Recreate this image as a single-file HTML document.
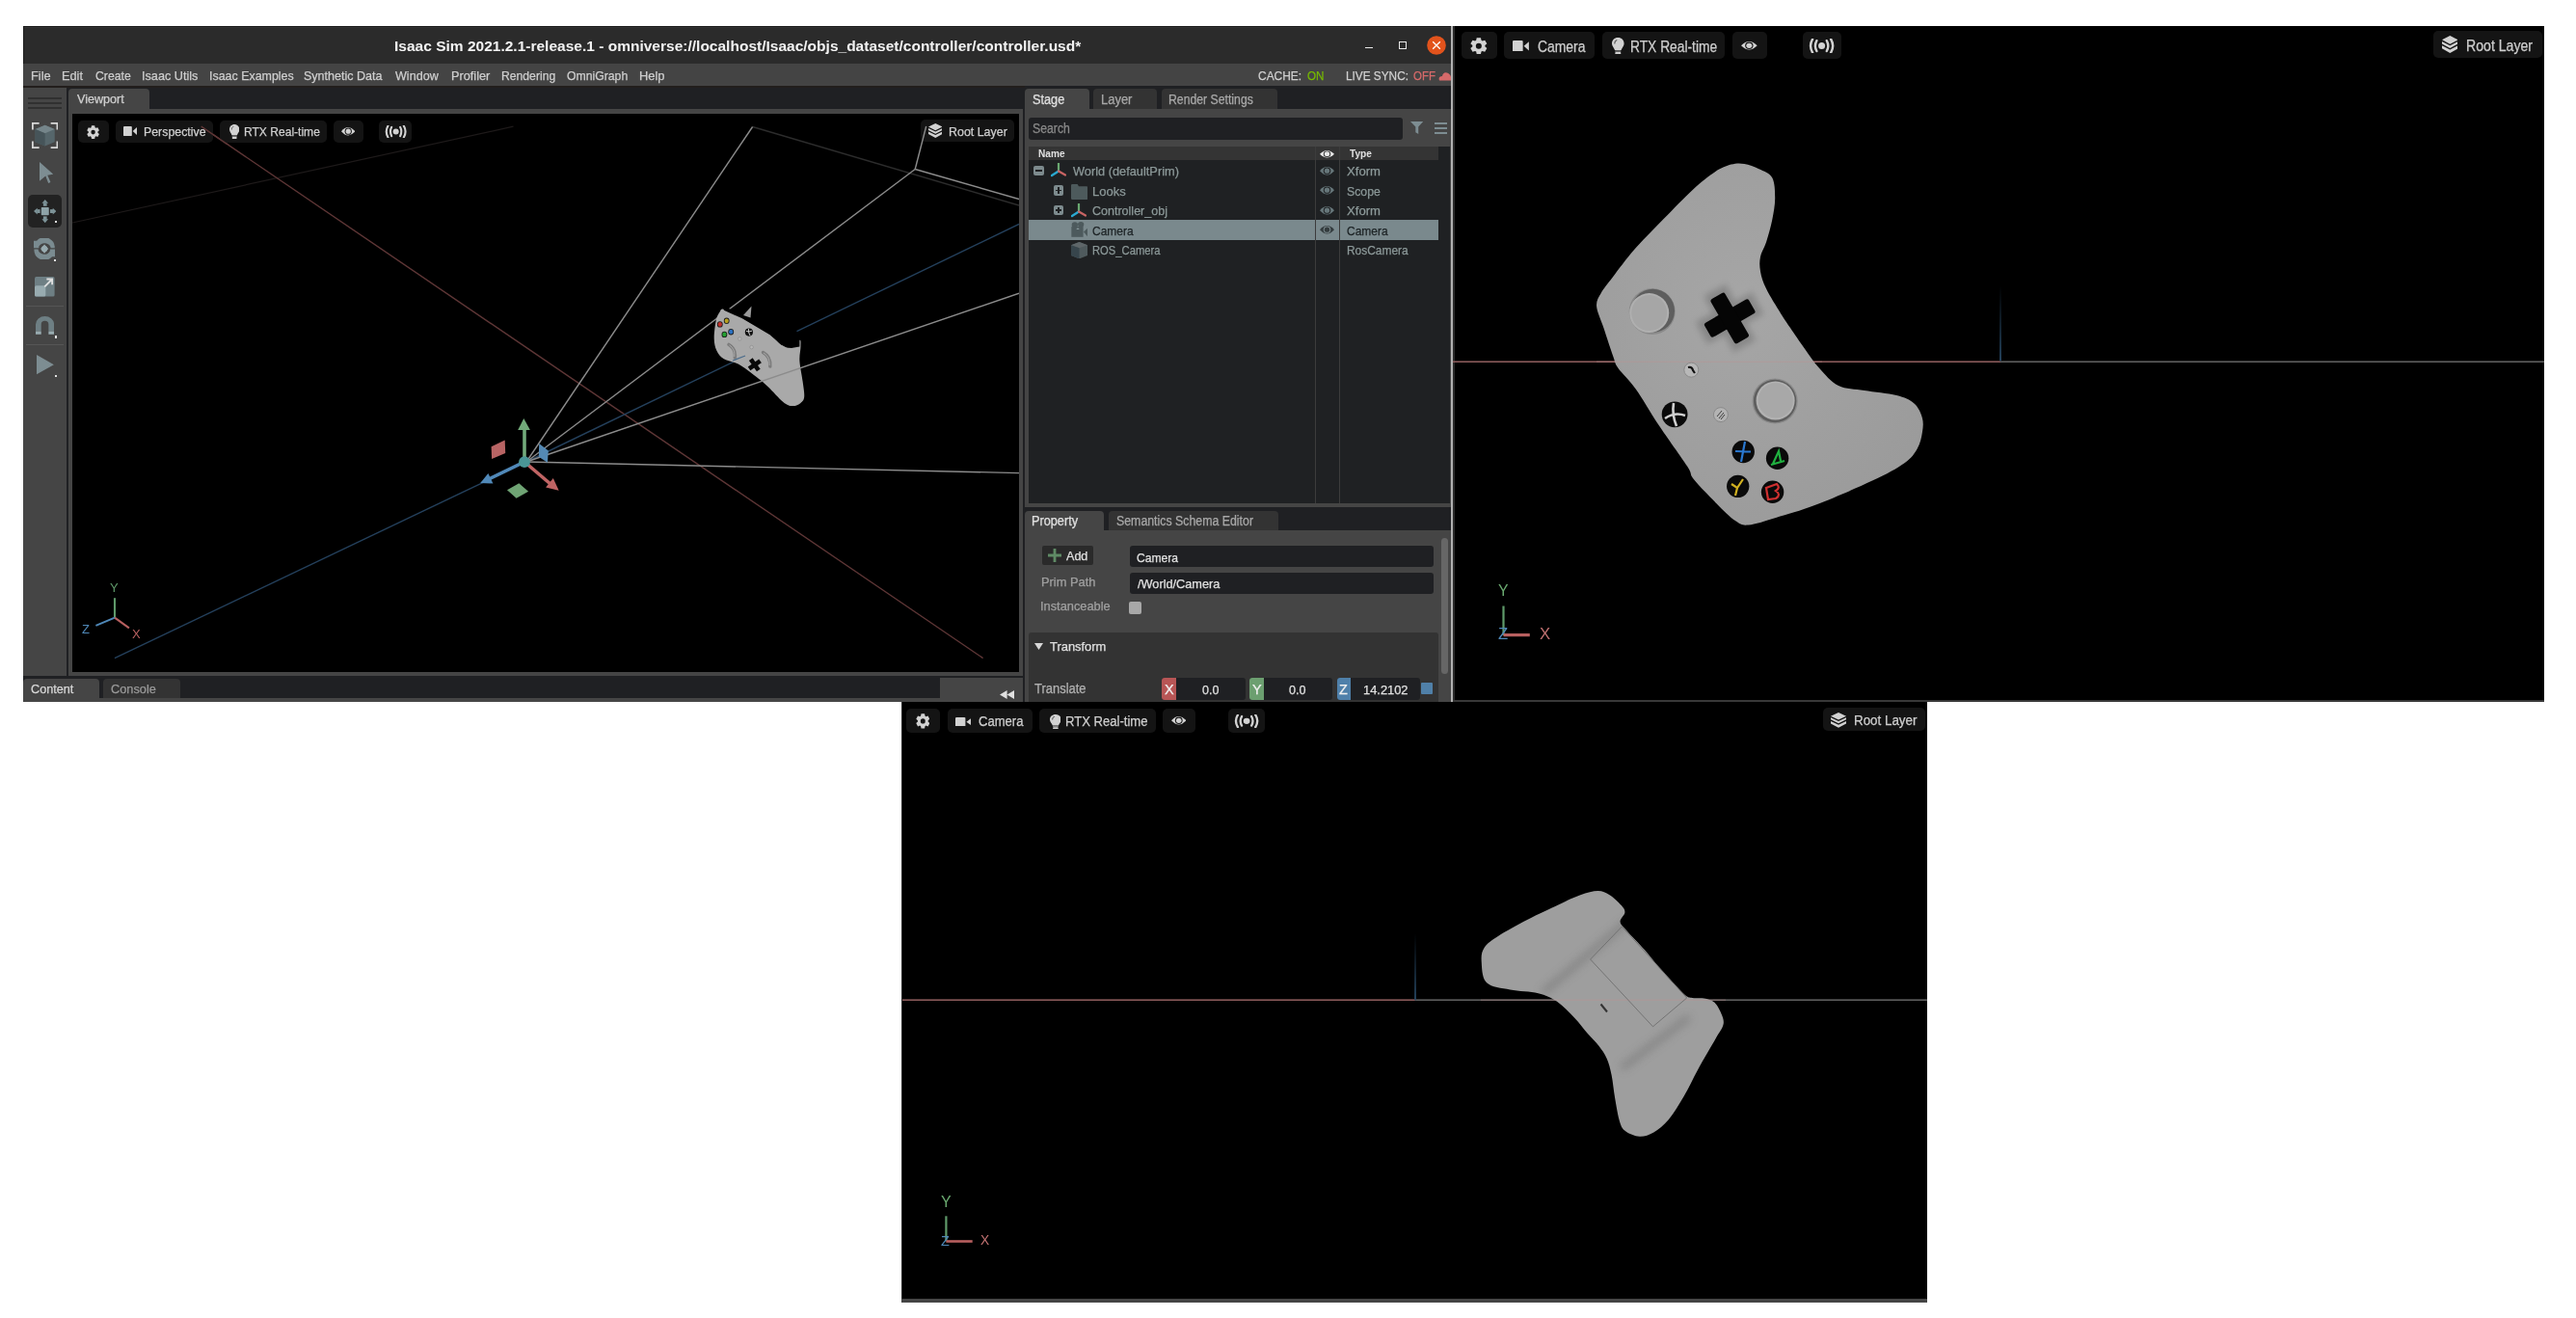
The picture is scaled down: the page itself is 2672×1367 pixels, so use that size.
<!DOCTYPE html>
<html><head><meta charset="utf-8"><style>
html,body{margin:0;padding:0;overflow:hidden;}
body{width:2672px;height:1367px;background:#fff;position:relative;overflow:hidden;font-family:"Liberation Sans",sans-serif;}
body>div,body>svg{position:absolute;}
svg{overflow:hidden;}
.t{white-space:nowrap;line-height:1;-webkit-text-stroke:0.25px currentColor;}
</style></head><body>
<div style="left:24.0px;top:27.0px;width:1481.0px;height:701.0px;background:#454545;"></div>
<div style="left:24.0px;top:27.0px;width:1481.0px;height:39.0px;background:#2b2b2b;border-radius:3px 3px 0 0;"></div>
<div style="left:24.0px;top:27.0px;width:1481.0px;height:1.0px;background:#1a1a1a;"></div>
<div style="left:25.0px;top:28.0px;width:1479.0px;height:1.0px;background:#333333;"></div>
<div style="left:24.0px;top:27.0px;width:1.0px;height:39.0px;background:#1c1c1c;"></div>
<div class="t" style="left:408.95px;top:39.50px;font-size:15.36px;color:#f2f2f2;font-weight:bold;transform:scaleX(1.0101);transform-origin:0 0;-webkit-text-stroke:0;">Isaac Sim 2021.2.1-release.1 - omniverse://localhost/Isaac/objs_dataset/controller/controller.usd*</div>
<div style="left:1416.0px;top:48.5px;width:8.0px;height:1.7px;background:#e8e8e8;"></div>
<div style="left:1451.0px;top:43.0px;width:8.0px;height:8.0px;background:transparent;border:1.3px solid #e8e8e8;box-sizing:border-box;"></div>
<svg style="left:1480px;top:36.8px" width="20" height="20"><circle cx="10" cy="10" r="9.8" fill="#e2531c"/><path d="M6.2 6.2 L13.8 13.8 M13.8 6.2 L6.2 13.8" stroke="#fff" stroke-width="1.3"/></svg>
<div style="left:24.0px;top:66.0px;width:1481.0px;height:23.0px;background:#444444;"></div>
<div class="t" style="left:32.32px;top:71.67px;font-size:13.62px;color:#cfcfcf;transform:scaleX(0.9423);transform-origin:0 0;">File</div>
<div class="t" style="left:64.32px;top:71.67px;font-size:13.62px;color:#cfcfcf;transform:scaleX(0.9378);transform-origin:0 0;">Edit</div>
<div class="t" style="left:98.79px;top:71.67px;font-size:13.62px;color:#cfcfcf;transform:scaleX(0.8981);transform-origin:0 0;">Create</div>
<div class="t" style="left:146.69px;top:71.67px;font-size:13.62px;color:#cfcfcf;transform:scaleX(0.9309);transform-origin:0 0;">Isaac Utils</div>
<div class="t" style="left:216.61px;top:71.67px;font-size:13.62px;color:#cfcfcf;transform:scaleX(0.9132);transform-origin:0 0;">Isaac Examples</div>
<div class="t" style="left:315.48px;top:71.67px;font-size:13.62px;color:#cfcfcf;transform:scaleX(0.9205);transform-origin:0 0;">Synthetic Data</div>
<div class="t" style="left:410.46px;top:71.67px;font-size:13.62px;color:#cfcfcf;transform:scaleX(0.9237);transform-origin:0 0;">Window</div>
<div class="t" style="left:467.62px;top:71.67px;font-size:13.62px;color:#cfcfcf;transform:scaleX(0.9357);transform-origin:0 0;">Profiler</div>
<div class="t" style="left:520.16px;top:71.67px;font-size:13.62px;color:#cfcfcf;transform:scaleX(0.8951);transform-origin:0 0;">Rendering</div>
<div class="t" style="left:588.49px;top:71.67px;font-size:13.62px;color:#cfcfcf;transform:scaleX(0.8986);transform-origin:0 0;">OmniGraph</div>
<div class="t" style="left:663.11px;top:71.67px;font-size:13.62px;color:#cfcfcf;transform:scaleX(0.9465);transform-origin:0 0;">Help</div>
<div class="t" style="left:1305.15px;top:71.79px;font-size:13.48px;color:#d0d0d0;transform:scaleX(0.8873);transform-origin:0 0;">CACHE:</div>
<div class="t" style="left:1356.06px;top:71.79px;font-size:13.48px;color:#76b900;transform:scaleX(0.8644);transform-origin:0 0;">ON</div>
<div class="t" style="left:1396.02px;top:71.79px;font-size:13.48px;color:#d0d0d0;transform:scaleX(0.8763);transform-origin:0 0;">LIVE SYNC:</div>
<div class="t" style="left:1465.57px;top:71.79px;font-size:13.48px;color:#d66a6a;transform:scaleX(0.8502);transform-origin:0 0;">OFF</div>
<svg style="left:1492px;top:74px" width="13" height="10"><path d="M1 9.5 Q-0.5 5 4 5 Q5 0.5 9 1.5 Q12.5 2.5 13 6 L13 9.5 Z" fill="#d66a6a"/></svg>
<div style="left:24.0px;top:89.0px;width:1481.0px;height:2.0px;background:#221e1c;"></div>
<div style="left:24.0px;top:91.0px;width:45.0px;height:610.0px;background:#454545;"></div>
<div style="left:69.0px;top:91.0px;width:2.0px;height:610.0px;background:#1f2023;"></div>
<div style="left:29.0px;top:100.8px;width:34.8px;height:2.0px;background:#303030;"></div>
<div style="left:29.0px;top:106.1px;width:34.8px;height:2.0px;background:#303030;"></div>
<div style="left:29.0px;top:111.0px;width:34.8px;height:2.0px;background:#303030;"></div>
<svg style="left:32.80px;top:127.10px;" width="27.30" height="27.00" viewBox="0 0 100 100" preserveAspectRatio="none"><g fill="none" stroke="#d8d8d8" stroke-width="7"><path d="M3 28 V3 H28"/><path d="M72 3 H97 V28"/><path d="M3 72 V97 H28"/><path d="M97 72 V97 H72"/></g><path d="M50 10 L87 26 L87 75 L50 91 L13 75 L13 26 Z" fill="#56666b"/><path d="M50 10 L87 26 L50 42 L13 26 Z" fill="#75858a"/><path d="M13 26 L50 42 L50 91 L13 75 Z" fill="#465459"/></svg>
<svg style="left:40.70px;top:168.20px;" width="14.30" height="22.00" viewBox="0 0 100 100" preserveAspectRatio="none"><path d="M0 0 L100 58 L58 62 L80 96 L64 100 L44 66 L0 90 Z" fill="#7d8d92"/></svg>
<div style="left:29.0px;top:201.5px;width:34.6px;height:34.5px;background:#222222;border-radius:5px;"></div>
<svg style="left:34.80px;top:207.20px;" width="23.50" height="24.20" viewBox="0 0 100 100" preserveAspectRatio="none"><g fill="#7d9398"><path d="M50 0 L64 16 L36 16 Z"/><path d="M50 100 L64 84 L36 84 Z"/><path d="M0 50 L16 36 L16 64 Z"/><path d="M100 50 L84 36 L84 64 Z"/><rect x="42" y="14" width="16" height="14"/><rect x="42" y="72" width="16" height="14"/><rect x="14" y="42" width="14" height="16"/><rect x="72" y="42" width="14" height="16"/><rect x="33" y="33" width="34" height="34" rx="3" fill="#8ea3a8"/></g></svg>
<div style="left:56.5px;top:229.3px;width:2.2px;height:2.2px;background:#e0e0e0;"></div>
<svg style="left:34.80px;top:246.80px;" width="22.20" height="21.90" viewBox="0 0 100 100" preserveAspectRatio="none"><path d="M0 47 L0 12 L14 12 L22 5 A48 48 0 0 1 98 47 L80 47 A30 30 0 0 0 24 40 L24 47 Z" fill="#7a8b90"/><path d="M100 53 L100 88 L86 88 L78 95 A48 48 0 0 1 2 53 L20 53 A30 30 0 0 0 76 60 L76 53 Z" fill="#7a8b90"/><path d="M50 30 L68 50 L50 72 L32 50 Z" fill="#98abb0"/><circle cx="50" cy="51" r="14" fill="#98abb0"/></svg>
<div style="left:56.3px;top:268.6px;width:2.2px;height:2.2px;background:#e0e0e0;"></div>
<svg style="left:36.00px;top:287.20px;" width="20.60" height="20.60" viewBox="0 0 100 100" preserveAspectRatio="none"><rect x="0" y="0" width="100" height="100" rx="8" fill="#6e7f84"/><rect x="0" y="45" width="55" height="55" rx="8" fill="#98abb0"/><path d="M50 50 L88 12 M60 12 H88 V40" stroke="#e0e0e0" stroke-width="9" fill="none"/></svg>
<div style="left:26.7px;top:317.2px;width:39.1px;height:1.0px;background:#555555;"></div>
<svg style="left:36.90px;top:328.40px;" width="19.10" height="18.80" viewBox="0 0 100 100" preserveAspectRatio="none"><path d="M0 80 V45 A50 45 0 0 1 100 45 V80 H70 V45 A20 20 0 0 0 30 45 V80 Z" fill="#6e7f84"/><rect x="0" y="82" width="30" height="18" fill="#98abb0"/><rect x="70" y="82" width="30" height="18" fill="#98abb0"/></svg>
<div style="left:56.5px;top:348.4px;width:2.2px;height:2.2px;background:#e0e0e0;"></div>
<div style="left:26.7px;top:356.8px;width:39.1px;height:1.0px;background:#555555;"></div>
<svg style="left:37.80px;top:368.30px;" width="17.90" height="20.30" viewBox="0 0 100 100" preserveAspectRatio="none"><path d="M0 0 L100 50 L0 100 Z" fill="#7d8d92"/></svg>
<div style="left:56.5px;top:388.9px;width:2.2px;height:2.2px;background:#e0e0e0;"></div>
<div style="left:71.0px;top:91.0px;width:990.0px;height:22.0px;background:#1f2023;"></div>
<div style="left:71.0px;top:92.0px;width:84.0px;height:21.0px;background:#454545;border-radius:4px 4px 0 0;"></div>
<div class="t" style="left:79.81px;top:97.05px;font-size:12.46px;color:#d0d0d0;transform:scaleX(1.0109);transform-origin:0 0;">Viewport</div>
<div style="left:71.0px;top:113.0px;width:990.0px;height:588.0px;background:#454545;"></div>
<div style="left:75.0px;top:118.0px;width:982.0px;height:579.0px;background:#000000;"></div>
<div style="left:1061.0px;top:91.0px;width:2.0px;height:637.0px;background:#1f2023;"></div>
<svg style="left:75px;top:118px" width="982" height="579" viewBox="75 118 982 579"><line x1="75" y1="231" x2="532.5" y2="131.2" stroke="#1e1a1a" stroke-width="1.2"/><line x1="208.7" y1="131.2" x2="1019.6" y2="682.6" stroke="#5e3636" stroke-width="1.4"/><line x1="118.9" y1="682.6" x2="546" y2="479" stroke="#24405c" stroke-width="1.4"/><line x1="546" y1="479" x2="1057" y2="232.4" stroke="#24405c" stroke-width="1.4"/><line x1="780.6" y1="131.5" x2="1057" y2="213" stroke="#2c2c2c" stroke-width="1.4"/><line x1="546" y1="479" x2="949.2" y2="175.5" stroke="#8c8c8c" stroke-width="1.4"/><line x1="546" y1="479" x2="780.6" y2="131.5" stroke="#8c8c8c" stroke-width="1.4"/><line x1="546" y1="479" x2="1057" y2="490.6" stroke="#8c8c8c" stroke-width="1.4"/><line x1="949.2" y1="175.5" x2="1057" y2="206.6" stroke="#8c8c8c" stroke-width="1.4"/><path d="M750.3 320.7 C752.9 321.1 759.2 324.0 762.5 325.5 C765.8 327.0 763.9 326.2 769.9 329.7 C775.9 333.2 791.9 342.1 798.6 346.7 C805.3 351.3 806.6 355.1 810.3 357.4 C814.0 359.7 817.7 361.4 820.9 360.6 C824.1 359.8 827.8 352.8 829.4 352.6 C831.0 352.4 830.5 355.9 830.5 359.5 C830.5 363.1 829.0 368.4 829.4 374.4 C829.8 380.4 831.8 389.4 832.6 395.6 C833.4 401.8 834.6 407.9 834.2 411.6 C833.9 415.3 832.5 416.3 830.5 417.9 C828.5 419.5 825.0 421.3 822.0 421.1 C819.0 420.9 816.6 420.3 812.4 416.9 C808.1 413.5 801.3 405.3 796.5 400.9 C791.7 396.5 788.8 394.2 783.7 390.3 C778.6 386.4 771.2 380.6 765.7 377.6 C760.2 374.6 754.5 374.5 750.8 372.2 C747.1 369.9 745.1 367.2 743.4 363.7 C741.7 360.2 740.8 356.3 740.7 351.0 C740.6 345.7 741.8 336.5 742.8 331.9 C743.8 327.3 745.4 325.3 746.6 323.4 C747.9 321.5 747.6 320.3 750.3 320.7 Z" fill="#a9a9a9"/><polygon points="750.8,318.1 769.9,325.5 798.6,344.6 822,355.2 829.4,352.6 829.4,359.5 820.9,361.1 810.3,357.4 798.6,347.3 769.9,330.3 750.8,321.8" fill="#000"/><polygon points="790,341 812,339.5 826,342.5 830,352.6 822,355.2 810.3,356.3 798.6,345.6" fill="#000"/><path d="M771 327 L779.5 317.5 L778.5 329.5 Z" fill="#9a9a9a"/><ellipse cx="746.8" cy="336.4" rx="2.9" ry="3.2" fill="#1a1a1a"/><ellipse cx="746.8" cy="336.4" rx="2.1" ry="2.4" fill="#c0302a"/><ellipse cx="753.7" cy="332.8" rx="2.9" ry="3.2" fill="#1a1a1a"/><ellipse cx="753.7" cy="332.8" rx="2.1" ry="2.4" fill="#b8a020"/><ellipse cx="751.4" cy="346.9" rx="2.9" ry="3.2" fill="#1a1a1a"/><ellipse cx="751.4" cy="346.9" rx="2.1" ry="2.4" fill="#22a030"/><ellipse cx="758.2" cy="344.2" rx="2.9" ry="3.2" fill="#1a1a1a"/><ellipse cx="758.2" cy="344.2" rx="2.1" ry="2.4" fill="#2a70c0"/><circle cx="776.9" cy="344.6" r="4.1" fill="#111"/><path d="M774 343.5 Q777 344.5 780 343.2 M776.5 341 Q776 345 778 348" stroke="#ddd" stroke-width="0.9" fill="none"/><circle cx="767.3" cy="351.4" r="1.8" fill="#b8b8b8" stroke="#888" stroke-width="0.6"/><circle cx="779.6" cy="360.1" r="1.8" fill="#b8b8b8" stroke="#888" stroke-width="0.6"/><g transform="translate(782.8,378.3) rotate(-35)"><rect x="-7" y="-2.3" width="14" height="4.6" fill="#080808"/><rect x="-2.3" y="-7" width="4.6" height="14" fill="#080808"/></g><path d="M756 357.4 Q763.5 362 762.3 371" stroke="#7c7c7c" stroke-width="3.4" fill="none" stroke-linecap="round"/><path d="M756.5 357.8 Q762.8 362 761.8 370" stroke="#a8a8a8" stroke-width="1" fill="none"/><path d="M791.5 365.6 Q799.5 370 798.8 380.1" stroke="#7c7c7c" stroke-width="3.4" fill="none" stroke-linecap="round"/><path d="M792 366 Q798.8 370 798.2 379" stroke="#a8a8a8" stroke-width="1" fill="none"/><line x1="546" y1="479" x2="1057" y2="304.2" stroke="#8c8c8c" stroke-width="1.4"/><line x1="760" y1="374" x2="773" y2="369" stroke="#4e6e8c" stroke-width="1.3"/><polygon points="509.6,463.3 523.7,456.4 524.2,470.1 510.1,476" fill="#b86464"/><polygon points="559.2,460.1 568.8,467.4 567.9,479.7 558.8,473.7" fill="#5489b4"/><polygon points="526,508.3 538.3,501.3 548.1,509.7 535.6,516.7" fill="#6fa474"/><line x1="544" y1="479" x2="544" y2="446" stroke="#72aa7a" stroke-width="3.6"/><polygon points="537.2,446 549.9,446 543.3,434.1" fill="#72aa7a"/><line x1="544" y1="479" x2="571" y2="502" stroke="#c06464" stroke-width="3.6"/><polygon points="566.1,505.6 573.8,496 579.7,508.8" fill="#c06464"/><line x1="544" y1="479" x2="508" y2="496.5" stroke="#5088b8" stroke-width="3.6"/><polygon points="498.2,501 506.4,491 511.4,501.5" fill="#5088b8"/><circle cx="544" cy="479.2" r="5.9" fill="#4a9696"/><line x1="119" y1="620.2" x2="119" y2="640.6" stroke="#5f9a6a" stroke-width="2.1"/><line x1="119" y1="640.6" x2="99.4" y2="648.9" stroke="#4f88b8" stroke-width="2.1"/><line x1="119" y1="640.6" x2="133.9" y2="651.3" stroke="#b86060" stroke-width="2.1"/></svg>
<div class="t" style="left:114.07px;top:603.06px;font-size:13.04px;color:#5f9a6a;transform:scaleX(1.0001);transform-origin:0 0;-webkit-text-stroke:0;">Y</div>
<div class="t" style="left:85.25px;top:646.36px;font-size:13.04px;color:#4f88b8;transform:scaleX(1.0001);transform-origin:0 0;-webkit-text-stroke:0;">Z</div>
<div class="t" style="left:137.17px;top:650.56px;font-size:13.04px;color:#b86060;transform:scaleX(1.0001);transform-origin:0 0;-webkit-text-stroke:0;">X</div>
<div style="left:81.2px;top:125.0px;width:31.4px;height:22.8px;background:#141414;border-radius:5px;"></div>
<div style="left:119.9px;top:125.0px;width:101.3px;height:22.8px;background:#141414;border-radius:5px;"></div>
<div style="left:228.0px;top:125.0px;width:110.5px;height:22.8px;background:#141414;border-radius:5px;"></div>
<div style="left:345.6px;top:125.0px;width:31.3px;height:22.8px;background:#141414;border-radius:5px;"></div>
<div style="left:393.1px;top:125.0px;width:34.4px;height:22.8px;background:#141414;border-radius:5px;"></div>
<div style="left:955.2px;top:124.3px;width:96.8px;height:22.4px;background:#141414;border-radius:5px;"></div>
<svg style="left:89.90px;top:129.50px;" width="13.20" height="14.20" viewBox="0 0 100 100" preserveAspectRatio="none"><path d="M35.0 16.2 L37.9 1.5 L62.1 1.5 L65.0 16.2 L71.7 20.1 L86.0 15.3 L98.1 36.2 L86.8 46.1 L86.8 53.9 L98.1 63.8 L86.0 84.7 L71.7 79.9 L65.0 83.8 L62.1 98.5 L37.9 98.5 L35.0 83.8 L28.3 79.9 L14.0 84.7 L1.9 63.8 L13.2 53.9 L13.2 46.1 L1.9 36.2 L14.0 15.3 L28.3 20.1 Z" fill="#d2d2d2"/><circle cx="50" cy="50" r="17" fill="#141414"/></svg>
<svg style="left:127.80px;top:131.30px;" width="14.00" height="10.10" viewBox="0 0 100 100" preserveAspectRatio="none"><rect x="0" y="0" width="63" height="100" rx="8" fill="#d2d2d2"/><path d="M69 50 L100 10 L100 90 Z" fill="#d2d2d2"/></svg>
<svg style="left:238.00px;top:129.00px;" width="10.40" height="14.90" viewBox="0 0 100 140" preserveAspectRatio="none"><path d="M50 0 C80 0 100 22 100 50 C100 72 84 82 76 106 L24 106 C16 82 0 72 0 50 C0 22 20 0 50 0 Z" fill="#d2d2d2"/><rect x="26" y="110" width="48" height="9" fill="#9a9a9a"/><rect x="26" y="122" width="48" height="18" rx="8" fill="#d2d2d2"/><path d="M22 52 C22 35 30 24 42 20" stroke="#141414" stroke-width="9" fill="none" opacity="0.6"/></svg>
<svg style="left:353.50px;top:131.30px;" width="14.50" height="10.40" viewBox="0 0 100 72" preserveAspectRatio="none"><path d="M0 36 Q50 -22 100 36 Q50 94 0 36 Z" fill="#d2d2d2"/><circle cx="50" cy="36" r="25" fill="#141414"/><circle cx="50" cy="36" r="18" fill="#d2d2d2"/></svg>
<svg style="left:398.70px;top:130.00px;" width="23.30" height="13.00" viewBox="0 0 100 56" preserveAspectRatio="none"><circle cx="50" cy="28" r="13" fill="#d2d2d2"/><g stroke="#d2d2d2" stroke-width="9" fill="none" stroke-linecap="round"><path d="M31 8 Q20 28 31 48"/><path d="M69 8 Q80 28 69 48"/><path d="M15 2 Q0 28 15 54"/><path d="M85 2 Q100 28 85 54"/></g></svg>
<svg style="left:962.90px;top:128.00px;" width="14.60" height="14.90" viewBox="0 0 100 100" preserveAspectRatio="none"><path d="M50 0 L100 24 L50 48 L0 24 Z" fill="#d2d2d2"/><path d="M0 33 L50 57 L100 33 L100 47 L50 72 L0 47 Z" fill="#d2d2d2"/><path d="M0 57 L50 81 L100 57 L100 74 L50 100 L0 74 Z" fill="#d2d2d2"/></svg>
<div class="t" style="left:148.97px;top:130.46px;font-size:13.04px;color:#cfcfcf;transform:scaleX(0.9489);transform-origin:0 0;">Perspective</div>
<div class="t" style="left:252.79px;top:130.46px;font-size:13.04px;color:#cfcfcf;transform:scaleX(0.9257);transform-origin:0 0;">RTX Real-time</div>
<div class="t" style="left:984.07px;top:129.96px;font-size:13.04px;color:#cfcfcf;transform:scaleX(0.9539);transform-origin:0 0;">Root Layer</div>
<svg style="left:200px;top:125px" width="40" height="25" viewBox="200 125 40 25"><line x1="208.7" y1="131.2" x2="240" y2="152.5" stroke="#5e3636" stroke-width="1.4"/></svg>
<svg style="left:940px;top:125px" width="30" height="60" viewBox="940 125 30 60"><line x1="949.2" y1="175.5" x2="960.7" y2="131" stroke="#8c8c8c" stroke-width="1.4"/></svg>
<div style="left:24.0px;top:701.0px;width:1037.0px;height:23.0px;background:#1f2023;"></div>
<div style="left:24.0px;top:704.0px;width:79.0px;height:20.0px;background:#454545;border-radius:4px 4px 0 0;"></div>
<div style="left:107.0px;top:704.0px;width:80.0px;height:20.0px;background:#333333;border-radius:4px 4px 0 0;"></div>
<div style="left:24.0px;top:724.0px;width:949.0px;height:4.0px;background:#454545;"></div>
<div style="left:975.0px;top:703.0px;width:86.0px;height:25.0px;background:#454545;"></div>
<div class="t" style="left:31.58px;top:707.87px;font-size:13.62px;color:#d8d8d8;transform:scaleX(0.9294);transform-origin:0 0;">Content</div>
<div class="t" style="left:114.97px;top:707.87px;font-size:13.62px;color:#9a9a9a;transform:scaleX(0.9374);transform-origin:0 0;">Console</div>
<svg style="left:1037px;top:715.5px" width="15.2" height="9" viewBox="0 0 16 10" preserveAspectRatio="none"><path d="M0 5 L8 0 L8 10 Z M8 5 L16 0 L16 10 Z" fill="#e0e0e0"/></svg>
<div style="left:1063.0px;top:89.0px;width:442.0px;height:24.0px;background:#1f2023;"></div>
<div style="left:1063.0px;top:92.4px;width:67.0px;height:20.6px;background:#454545;border-radius:4px 4px 0 0;"></div>
<div style="left:1134.0px;top:92.4px;width:66.0px;height:20.6px;background:#333333;border-radius:4px 4px 0 0;"></div>
<div style="left:1204.7px;top:92.4px;width:120.8px;height:20.6px;background:#333333;border-radius:4px 4px 0 0;"></div>
<div class="t" style="left:1071.00px;top:96.82px;font-size:13.91px;color:#e0e0e0;transform:scaleX(0.9143);transform-origin:0 0;">Stage</div>
<div class="t" style="left:1141.53px;top:96.82px;font-size:13.91px;color:#a8a8a8;transform:scaleX(0.9313);transform-origin:0 0;">Layer</div>
<div class="t" style="left:1211.88px;top:96.82px;font-size:13.91px;color:#a8a8a8;transform:scaleX(0.8807);transform-origin:0 0;">Render Settings</div>
<div style="left:1067.0px;top:122.0px;width:388.0px;height:22.8px;background:#1f2023;border-radius:3px;"></div>
<div class="t" style="left:1070.92px;top:127.22px;font-size:13.91px;color:#8a8a8a;transform:scaleX(0.8824);transform-origin:0 0;">Search</div>
<svg style="left:1463.00px;top:126.10px;" width="13.30" height="12.90" viewBox="0 0 100 100" preserveAspectRatio="none"><path d="M0 0 H100 L62 42 V100 L40 88 V42 Z" fill="#7d8d92"/></svg>
<div style="left:1487.8px;top:127.1px;width:13.2px;height:2.0px;background:#7d8d92;"></div>
<div style="left:1487.8px;top:132.0px;width:13.2px;height:2.0px;background:#7d8d92;"></div>
<div style="left:1487.8px;top:136.8px;width:13.2px;height:2.0px;background:#7d8d92;"></div>
<div style="left:1067.0px;top:152.0px;width:437.0px;height:370.0px;background:#1f2123;"></div>
<div style="left:1067.0px;top:152.0px;width:425.1px;height:14.4px;background:#343434;"></div>
<div style="left:1364.0px;top:152.0px;width:1.0px;height:370.0px;background:#3c3c3c;"></div>
<div style="left:1389.0px;top:152.0px;width:1.0px;height:370.0px;background:#3c3c3c;"></div>
<div class="t" style="left:1076.87px;top:154.84px;font-size:10.00px;color:#e0e0e0;font-weight:bold;transform:scaleX(1.0095);transform-origin:0 0;-webkit-text-stroke:0;">Name</div>
<div class="t" style="left:1399.69px;top:154.77px;font-size:10.43px;color:#e0e0e0;font-weight:bold;transform:scaleX(0.9730);transform-origin:0 0;-webkit-text-stroke:0;">Type</div>
<svg style="left:1369.00px;top:154.70px;" width="15.00" height="9.40" viewBox="0 0 100 72" preserveAspectRatio="none"><path d="M0 36 Q50 -22 100 36 Q50 94 0 36 Z" fill="#e8e8e8"/><circle cx="50" cy="36" r="25" fill="#343434"/><circle cx="50" cy="36" r="18" fill="#e8e8e8"/></svg>
<div style="left:1067.0px;top:228.1px;width:425.1px;height:20.8px;background:#7a898d;"></div>
<div style="left:1364.0px;top:228.1px;width:1.0px;height:20.8px;background:#3c3c3c;"></div>
<div style="left:1389.0px;top:228.1px;width:1.0px;height:20.8px;background:#3c3c3c;"></div>
<div class="t" style="left:1112.72px;top:170.76px;font-size:13.04px;color:#8c9999;transform:scaleX(0.9811);transform-origin:0 0;">World (defaultPrim)</div>
<div class="t" style="left:1397.27px;top:170.76px;font-size:13.04px;color:#8c9999;transform:scaleX(1.0052);transform-origin:0 0;">Xform</div>
<div class="t" style="left:1132.62px;top:191.76px;font-size:13.04px;color:#8c9999;transform:scaleX(1.0007);transform-origin:0 0;">Looks</div>
<div class="t" style="left:1397.05px;top:191.76px;font-size:13.04px;color:#8c9999;transform:scaleX(0.9422);transform-origin:0 0;">Scope</div>
<div class="t" style="left:1133.02px;top:212.16px;font-size:13.04px;color:#8c9999;transform:scaleX(0.9610);transform-origin:0 0;">Controller_obj</div>
<div class="t" style="left:1397.27px;top:212.16px;font-size:13.04px;color:#8c9999;transform:scaleX(1.0052);transform-origin:0 0;">Xform</div>
<div class="t" style="left:1133.25px;top:232.66px;font-size:13.04px;color:#1c2224;transform:scaleX(0.9184);transform-origin:0 0;">Camera</div>
<div class="t" style="left:1396.95px;top:232.66px;font-size:13.04px;color:#1c2224;transform:scaleX(0.9184);transform-origin:0 0;">Camera</div>
<div class="t" style="left:1132.96px;top:253.16px;font-size:13.04px;color:#8c9999;transform:scaleX(0.8608);transform-origin:0 0;">ROS_Camera</div>
<div class="t" style="left:1396.60px;top:253.16px;font-size:13.04px;color:#8c9999;transform:scaleX(0.9155);transform-origin:0 0;">RosCamera</div>
<svg style="left:1369.00px;top:171.60px;" width="15.00" height="10.40" viewBox="0 0 100 72" preserveAspectRatio="none"><path d="M0 36 Q50 -22 100 36 Q50 94 0 36 Z" fill="#66767a"/><circle cx="50" cy="36" r="25" fill="#1f2123"/><circle cx="50" cy="36" r="18" fill="#66767a"/></svg>
<svg style="left:1369.00px;top:192.40px;" width="15.00" height="10.40" viewBox="0 0 100 72" preserveAspectRatio="none"><path d="M0 36 Q50 -22 100 36 Q50 94 0 36 Z" fill="#66767a"/><circle cx="50" cy="36" r="25" fill="#1f2123"/><circle cx="50" cy="36" r="18" fill="#66767a"/></svg>
<svg style="left:1369.00px;top:212.60px;" width="15.00" height="10.40" viewBox="0 0 100 72" preserveAspectRatio="none"><path d="M0 36 Q50 -22 100 36 Q50 94 0 36 Z" fill="#66767a"/><circle cx="50" cy="36" r="25" fill="#1f2123"/><circle cx="50" cy="36" r="18" fill="#66767a"/></svg>
<svg style="left:1369.00px;top:233.30px;" width="15.00" height="10.40" viewBox="0 0 100 72" preserveAspectRatio="none"><path d="M0 36 Q50 -22 100 36 Q50 94 0 36 Z" fill="#343c3e"/><circle cx="50" cy="36" r="25" fill="#7a898d"/><circle cx="50" cy="36" r="18" fill="#343c3e"/></svg>
<div style="left:1072.1px;top:171.9px;width:10.7px;height:9.8px;background:#7d8b8e;border-radius:2px;"></div>
<div style="left:1074.3px;top:176.0px;width:6.3px;height:1.6px;background:#1f2123;"></div>
<div style="left:1093.0px;top:192.4px;width:10.2px;height:10.2px;background:#7d8b8e;border-radius:2px;"></div>
<div style="left:1095.0px;top:196.7px;width:6.2px;height:1.6px;background:#1f2123;"></div>
<div style="left:1097.3px;top:194.4px;width:1.6px;height:6.2px;background:#1f2123;"></div>
<div style="left:1093.0px;top:212.8px;width:10.2px;height:10.2px;background:#7d8b8e;border-radius:2px;"></div>
<div style="left:1095.0px;top:217.1px;width:6.2px;height:1.6px;background:#1f2123;"></div>
<div style="left:1097.3px;top:214.8px;width:1.6px;height:6.2px;background:#1f2123;"></div>
<svg style="left:1090.00px;top:169.00px;" width="16.00" height="15.00" viewBox="0 0 16 15" preserveAspectRatio="none"><path d="M8 0 V8.5" stroke="#6aa870" stroke-width="2.2"/><path d="M8 8.5 L1 13" stroke="#2aa8d0" stroke-width="2.4" stroke-linecap="round"/><path d="M8 8.5 L15 12.5" stroke="#c86464" stroke-width="2.2" stroke-linecap="round"/></svg>
<svg style="left:1110.50px;top:211.00px;" width="16.00" height="15.00" viewBox="0 0 16 15" preserveAspectRatio="none"><path d="M8 0 V8.5" stroke="#6aa870" stroke-width="2.2"/><path d="M8 8.5 L1 13" stroke="#2aa8d0" stroke-width="2.4" stroke-linecap="round"/><path d="M8 8.5 L15 12.5" stroke="#c86464" stroke-width="2.2" stroke-linecap="round"/></svg>
<svg style="left:1110.50px;top:190.80px;" width="17.40" height="16.00" viewBox="0 0 100 100" preserveAspectRatio="none"><path d="M0 8 Q0 0 8 0 H38 L46 14 H92 Q100 14 100 22 V92 Q100 100 92 100 H8 Q0 100 0 92 Z" fill="#4d5a5c"/></svg>
<svg style="left:1110.50px;top:230.20px;" width="17.50" height="15.80" viewBox="0 0 100 100" preserveAspectRatio="none"><circle cx="22" cy="20" r="18" fill="#4d5a5d"/><circle cx="58" cy="18" r="18" fill="#4d5a5d"/><rect x="2" y="32" width="70" height="68" fill="#4d5a5d"/><path d="M74 66 L100 40 L100 100 Z" fill="#4d5a5d"/><path d="M30 50 L40 40 L50 50 Z" fill="#8a9a9e"/></svg>
<svg style="left:1110.50px;top:250.90px;" width="17.00" height="17.40" viewBox="0 0 100 100" preserveAspectRatio="none"><path d="M50 0 L100 18 L100 80 L50 100 L0 80 L0 18 Z" fill="#4f5a5d"/><path d="M50 0 L100 18 L50 36 L0 18 Z" fill="#5e6669"/><path d="M0 18 L50 36 L50 100 L0 80 Z" fill="#37454c"/></svg>
<div style="left:1067.0px;top:522.0px;width:438.0px;height:4.0px;background:#454545;"></div>
<div style="left:1063.0px;top:526.0px;width:442.0px;height:24.0px;background:#1f2023;"></div>
<div style="left:1063.0px;top:529.7px;width:82.4px;height:20.3px;background:#454545;border-radius:4px 4px 0 0;"></div>
<div style="left:1150.0px;top:529.7px;width:175.6px;height:20.3px;background:#333333;border-radius:4px 4px 0 0;"></div>
<div class="t" style="left:1070.37px;top:533.85px;font-size:13.77px;color:#e0e0e0;transform:scaleX(0.9238);transform-origin:0 0;">Property</div>
<div class="t" style="left:1157.75px;top:533.85px;font-size:13.77px;color:#a8a8a8;transform:scaleX(0.8966);transform-origin:0 0;">Semantics Schema Editor</div>
<div style="left:1063.0px;top:550.0px;width:442.0px;height:178.0px;background:#454545;"></div>
<div style="left:1494.5px;top:557.8px;width:7.5px;height:141.2px;background:#666666;border-radius:4px;"></div>
<div style="left:1080.5px;top:565.8px;width:53.5px;height:20.1px;background:#2a2a2a;border-radius:2px;"></div>
<div class="t" style="left:1105.59px;top:570.14px;font-size:13.19px;color:#e0e0e0;transform:scaleX(0.9530);transform-origin:0 0;">Add</div>
<svg style="left:1087px;top:569px" width="14" height="14"><path d="M7 0 V14 M0 7 H14" stroke="#5f8a65" stroke-width="2.8"/></svg>
<div style="left:1171.5px;top:565.8px;width:315.4px;height:22.3px;background:#1f2023;border-radius:3px;"></div>
<div class="t" style="left:1179.01px;top:571.64px;font-size:13.19px;color:#e0e0e0;transform:scaleX(0.9183);transform-origin:0 0;">Camera</div>
<div style="left:1171.5px;top:593.5px;width:315.4px;height:22.1px;background:#1f2023;border-radius:3px;"></div>
<div class="t" style="left:1179.59px;top:599.34px;font-size:13.19px;color:#e0e0e0;transform:scaleX(0.9654);transform-origin:0 0;">/World/Camera</div>
<div class="t" style="left:1079.98px;top:597.68px;font-size:12.90px;color:#a0a0a0;transform:scaleX(0.9973);transform-origin:0 0;">Prim Path</div>
<div class="t" style="left:1078.95px;top:623.38px;font-size:12.90px;color:#a0a0a0;transform:scaleX(0.9947);transform-origin:0 0;">Instanceable</div>
<div style="left:1171.0px;top:624.0px;width:13.3px;height:13.0px;background:#a8a8a8;border-radius:2px;"></div>
<div style="left:1067.2px;top:656.4px;width:424.4px;height:71.6px;background:#333333;border-radius:3px 3px 0 0;"></div>
<svg style="left:1073px;top:666.5px" width="9" height="7"><path d="M0 0 H9 L4.5 7 Z" fill="#d8d8d8"/></svg>
<div class="t" style="left:1089.20px;top:664.21px;font-size:13.33px;color:#e0e0e0;transform:scaleX(0.9684);transform-origin:0 0;">Transform</div>
<div class="t" style="left:1073.07px;top:707.75px;font-size:13.77px;color:#b0b0b0;transform:scaleX(0.9411);transform-origin:0 0;">Translate</div>
<div style="left:1205.1px;top:703.0px;width:86.7px;height:22.7px;background:#1f2023;border-radius:3px;"></div>
<div style="left:1205.1px;top:703.0px;width:14.9px;height:22.7px;background:#b85656;border-radius:3px 0 0 3px;"></div>
<div class="t" style="left:1207.97px;top:707.73px;font-size:14.49px;color:#f0f0f0;transform:scaleX(1.0001);transform-origin:0 0;">X</div>
<div class="t" style="left:1246.54px;top:708.59px;font-size:13.48px;color:#e0e0e0;transform:scaleX(0.9296);transform-origin:0 0;">0.0</div>
<div style="left:1296.2px;top:703.0px;width:86.3px;height:22.7px;background:#1f2023;border-radius:3px;"></div>
<div style="left:1296.2px;top:703.0px;width:14.6px;height:22.7px;background:#6c9f70;border-radius:3px 0 0 3px;"></div>
<div class="t" style="left:1299.07px;top:707.73px;font-size:14.49px;color:#f0f0f0;transform:scaleX(1.0001);transform-origin:0 0;">Y</div>
<div class="t" style="left:1337.04px;top:708.59px;font-size:13.48px;color:#e0e0e0;transform:scaleX(0.9352);transform-origin:0 0;">0.0</div>
<div style="left:1386.7px;top:703.0px;width:86.5px;height:22.7px;background:#1f2023;border-radius:3px;"></div>
<div style="left:1386.7px;top:703.0px;width:14.8px;height:22.7px;background:#4f80aa;border-radius:3px 0 0 3px;"></div>
<div class="t" style="left:1389.45px;top:707.73px;font-size:14.49px;color:#f0f0f0;transform:scaleX(1.0001);transform-origin:0 0;">Z</div>
<div class="t" style="left:1413.55px;top:708.59px;font-size:13.48px;color:#e0e0e0;transform:scaleX(0.9549);transform-origin:0 0;">14.2102</div>
<div style="left:1474.0px;top:708.0px;width:12.0px;height:12.0px;background:#5080a8;border-radius:1px;"></div>
<div style="left:1505.0px;top:27.0px;width:2.0px;height:701.0px;background:#b0b0b0;"></div>
<div style="left:1507.0px;top:27.0px;width:1132.0px;height:699.0px;background:#000000;"></div>
<div style="left:1507.0px;top:726.0px;width:1132.0px;height:2.0px;background:#383838;"></div>
<div style="left:1507.0px;top:27.0px;width:2.0px;height:699.0px;background:#2a2a2a;"></div>
<svg style="left:1507px;top:27px" width="1132" height="699" viewBox="1507 27 1132 699"><defs><linearGradient id="gb" x1="0" y1="0" x2="0" y2="1"><stop offset="0" stop-color="#1e3a52" stop-opacity="0"/><stop offset="1" stop-color="#24425c"/></linearGradient></defs><rect x="1507" y="374.4" width="568" height="1.6" fill="#8a5a5a"/><rect x="2075" y="374.4" width="564" height="1.6" fill="#5e5e5e"/><rect x="2074" y="296.4" width="2" height="78" fill="url(#gb)"/><defs><radialGradient id="cg" cx="0.45" cy="0.4" r="0.7"><stop offset="0" stop-color="#a6a6a6"/><stop offset="1" stop-color="#9a9a9a"/></radialGradient></defs><path d="M1795.7 170.6 C1800.8 169.2 1804.5 169.1 1809.3 169.9 C1814.1 170.7 1819.7 172.8 1824.5 175.2 C1829.3 177.6 1835.4 179.2 1838.2 184.3 C1841.0 189.4 1841.2 198.2 1841.2 205.5 C1841.2 212.8 1839.7 220.7 1838.2 228.3 C1836.7 235.9 1834.1 244.7 1832.1 251.0 C1830.1 257.3 1827.0 261.1 1826.0 266.2 C1825.0 271.3 1825.0 275.8 1826.0 281.4 C1827.0 287.0 1828.5 292.3 1832.1 299.6 C1835.6 306.9 1843.1 318.7 1847.3 325.4 C1851.5 332.1 1852.9 333.9 1857.0 340.0 C1861.1 346.1 1867.0 354.8 1872.0 361.7 C1877.0 368.6 1881.2 375.3 1887.0 381.7 C1892.8 388.1 1899.2 396.2 1907.0 400.1 C1914.8 404.0 1923.8 403.4 1933.8 405.1 C1943.8 406.8 1958.5 407.9 1967.1 410.1 C1975.7 412.3 1981.0 414.6 1985.5 418.5 C1990.0 422.4 1992.5 428.5 1993.9 433.5 C1995.3 438.5 1994.8 443.2 1993.9 448.5 C1993.1 453.8 1991.9 459.9 1988.8 465.2 C1985.7 470.5 1983.3 474.6 1975.5 480.2 C1967.7 485.8 1957.4 491.4 1942.1 498.6 C1926.8 505.8 1900.4 517.2 1883.7 523.6 C1867.0 530.0 1853.7 533.5 1842.0 537.0 C1830.3 540.5 1820.6 544.0 1813.6 544.5 C1806.6 545.0 1805.8 544.1 1800.2 540.3 C1794.6 536.5 1787.4 529.1 1780.2 521.9 C1773.0 514.7 1761.8 503.3 1756.8 496.9 C1751.8 490.5 1756.2 492.9 1750.1 483.5 C1744.0 474.1 1729.0 453.6 1720.1 440.2 C1711.2 426.8 1703.7 413.1 1696.7 403.4 C1689.8 393.6 1682.3 387.3 1678.4 381.7 C1674.5 376.1 1675.9 376.9 1673.4 370.0 C1670.9 363.1 1666.3 348.7 1663.4 340.0 C1660.5 331.3 1656.6 323.8 1656.1 317.8 C1655.6 311.8 1657.8 309.2 1660.6 304.2 C1663.4 299.1 1667.0 295.1 1672.8 287.5 C1678.6 279.9 1686.7 268.7 1695.5 258.6 C1704.3 248.5 1715.8 237.2 1725.9 226.8 C1736.0 216.4 1747.4 204.5 1756.2 196.4 C1765.0 188.3 1772.4 182.5 1779.0 178.2 C1785.6 173.9 1790.7 172.0 1795.7 170.6 Z" fill="url(#cg)"/><line x1="1656" y1="375.2" x2="1890" y2="375.2" stroke="#c09090" stroke-width="1" opacity="0.45"/><circle cx="1713.7" cy="323.1" r="24" fill="#8a8a8a"/><circle cx="1714.5" cy="322.3" r="22.5" fill="#5e5e5e"/><circle cx="1710.7" cy="324.6" r="20.5" fill="#b0b0b0"/><circle cx="1710.7" cy="324.6" r="18.5" fill="#a6a6a6"/><circle cx="1841.1" cy="416" r="23.6" fill="#8a8a8a"/><circle cx="1841.1" cy="416" r="22.2" fill="#5e5e5e"/><circle cx="1841.6" cy="415.5" r="20" fill="#b2b2b2"/><circle cx="1841.8" cy="415.3" r="18" fill="#a8a8a8"/><defs><filter id="bl1" x="-50%" y="-50%" width="200%" height="200%"><feGaussianBlur stdDeviation="3"/></filter></defs><g transform="translate(1794.2,330) rotate(-28)" filter="url(#bl1)" opacity="0.35"><rect x="-33" y="-13" width="66" height="26" fill="#555"/><rect x="-13" y="-33" width="26" height="66" fill="#555"/></g><g transform="translate(1794.2,330) rotate(-30)"><rect x="-26.5" y="-8.5" width="53" height="17" rx="2.5" fill="#050505"/><rect x="-8.5" y="-26.5" width="17" height="53" rx="2.5" fill="#050505"/></g><circle cx="1754.3" cy="383.7" r="7.5" fill="#b8b8b8" stroke="#8a8a8a" stroke-width="1"/><path d="M1751 381 Q1755 380 1756 384 L1758 387" stroke="#111" stroke-width="2.2" fill="none"/><circle cx="1784.9" cy="430.1" r="7.5" fill="#b4b4b4" stroke="#8a8a8a" stroke-width="1"/><path d="M1781 432 L1786 426 M1783 434 L1788 428 M1785 435 L1789 430" stroke="#333" stroke-width="0.9"/><circle cx="1737.1" cy="429.8" r="13.4" fill="#0a0a0a"/><path d="M1727 434 Q1737 427 1748 431 M1736 418 Q1734 430 1739 442" stroke="#d0d0d0" stroke-width="2.6" fill="none"/><circle cx="1808.2" cy="468.5" r="11.7" fill="#0a0a0a"/><path d="M1800 468 L1816 468.5 M1810 458 L1806 479" stroke="#2a78d0" stroke-width="2.2" fill="none"/><circle cx="1843.6" cy="475.2" r="11.7" fill="#0a0a0a"/><path d="M1837 482 L1851 478 M1839 481 L1845 468 L1847 478" stroke="#20b040" stroke-width="2.2" fill="none"/><circle cx="1802.7" cy="504.4" r="11.7" fill="#0a0a0a"/><path d="M1796 502 L1802 506 L1808 497 M1802 506 L1800 514" stroke="#d0b020" stroke-width="2.2" fill="none"/><circle cx="1838.6" cy="510.3" r="11.7" fill="#0a0a0a"/><path d="M1832 506 L1843 502 Q1847 506 1842 509 Q1848 513 1842 517 L1834 518 Z" stroke="#d03030" stroke-width="2.2" fill="none"/><line x1="1559.5" y1="628.5" x2="1559.5" y2="659" stroke="#5f9a6a" stroke-width="2.2"/><line x1="1559.5" y1="658.6" x2="1586.8" y2="658.6" stroke="#b86060" stroke-width="3.2"/></svg>
<div class="t" style="left:1553.77px;top:605.43px;font-size:15.80px;color:#6aaa70;transform:scaleX(1.0001);transform-origin:0 0;-webkit-text-stroke:0;">Y</div>
<div class="t" style="left:1597.41px;top:649.59px;font-size:16.67px;color:#c07070;transform:scaleX(1.0001);transform-origin:0 0;-webkit-text-stroke:0;">X</div>
<div class="t" style="left:1553.58px;top:649.89px;font-size:16.67px;color:#4f88b8;transform:scaleX(1.0001);transform-origin:0 0;-webkit-text-stroke:0;">Z</div>
<div style="left:1516.0px;top:33.4px;width:37.0px;height:27.4px;background:#141414;border-radius:5px;"></div>
<div style="left:1560.4px;top:33.4px;width:93.5px;height:27.4px;background:#141414;border-radius:5px;"></div>
<div style="left:1661.5px;top:33.4px;width:127.2px;height:27.4px;background:#141414;border-radius:5px;"></div>
<div style="left:1796.8px;top:33.4px;width:36.0px;height:27.4px;background:#141414;border-radius:5px;"></div>
<div style="left:1869.9px;top:33.4px;width:39.9px;height:27.4px;background:#141414;border-radius:5px;"></div>
<div style="left:2524.0px;top:32.4px;width:112.5px;height:27.6px;background:#141414;border-radius:5px;"></div>
<svg style="left:1525.00px;top:38.50px;" width="17.70" height="17.40" viewBox="0 0 100 100" preserveAspectRatio="none"><path d="M35.0 16.2 L37.9 1.5 L62.1 1.5 L65.0 16.2 L71.7 20.1 L86.0 15.3 L98.1 36.2 L86.8 46.1 L86.8 53.9 L98.1 63.8 L86.0 84.7 L71.7 79.9 L65.0 83.8 L62.1 98.5 L37.9 98.5 L35.0 83.8 L28.3 79.9 L14.0 84.7 L1.9 63.8 L13.2 53.9 L13.2 46.1 L1.9 36.2 L14.0 15.3 L28.3 20.1 Z" fill="#d2d2d2"/><circle cx="50" cy="50" r="17" fill="#141414"/></svg>
<svg style="left:1569.10px;top:41.80px;" width="16.90" height="11.60" viewBox="0 0 100 100" preserveAspectRatio="none"><rect x="0" y="0" width="63" height="100" rx="8" fill="#d2d2d2"/><path d="M69 50 L100 10 L100 90 Z" fill="#d2d2d2"/></svg>
<svg style="left:1672.10px;top:38.60px;" width="12.60" height="17.20" viewBox="0 0 100 140" preserveAspectRatio="none"><path d="M50 0 C80 0 100 22 100 50 C100 72 84 82 76 106 L24 106 C16 82 0 72 0 50 C0 22 20 0 50 0 Z" fill="#d2d2d2"/><rect x="26" y="110" width="48" height="9" fill="#9a9a9a"/><rect x="26" y="122" width="48" height="18" rx="8" fill="#d2d2d2"/><path d="M22 52 C22 35 30 24 42 20" stroke="#141414" stroke-width="9" fill="none" opacity="0.6"/></svg>
<svg style="left:1806.30px;top:42.10px;" width="16.70" height="10.60" viewBox="0 0 100 72" preserveAspectRatio="none"><path d="M0 36 Q50 -22 100 36 Q50 94 0 36 Z" fill="#d2d2d2"/><circle cx="50" cy="36" r="25" fill="#141414"/><circle cx="50" cy="36" r="18" fill="#d2d2d2"/></svg>
<svg style="left:1876.00px;top:39.60px;" width="27.20" height="15.20" viewBox="0 0 100 56" preserveAspectRatio="none"><circle cx="50" cy="28" r="13" fill="#d2d2d2"/><g stroke="#d2d2d2" stroke-width="9" fill="none" stroke-linecap="round"><path d="M31 8 Q20 28 31 48"/><path d="M69 8 Q80 28 69 48"/><path d="M15 2 Q0 28 15 54"/><path d="M85 2 Q100 28 85 54"/></g></svg>
<svg style="left:2532.70px;top:37.00px;" width="16.60" height="18.00" viewBox="0 0 100 100" preserveAspectRatio="none"><path d="M50 0 L100 24 L50 48 L0 24 Z" fill="#d2d2d2"/><path d="M0 33 L50 57 L100 33 L100 47 L50 72 L0 47 Z" fill="#d2d2d2"/><path d="M0 57 L50 81 L100 57 L100 74 L50 100 L0 74 Z" fill="#d2d2d2"/></svg>
<div class="t" style="left:1594.60px;top:40.65px;font-size:15.65px;color:#cfcfcf;transform:scaleX(0.8893);transform-origin:0 0;">Camera</div>
<div class="t" style="left:1690.77px;top:40.65px;font-size:15.65px;color:#cfcfcf;transform:scaleX(0.8808);transform-origin:0 0;">RTX Real-time</div>
<div class="t" style="left:2557.74px;top:39.55px;font-size:15.65px;color:#cfcfcf;transform:scaleX(0.9027);transform-origin:0 0;">Root Layer</div>
<div style="left:935.0px;top:728.0px;width:1064.0px;height:619.0px;background:#000000;"></div>
<div style="left:935.0px;top:728.0px;width:1.0px;height:619.0px;background:#2a2a2a;"></div>
<div style="left:935.0px;top:1347.0px;width:1064.0px;height:3.5px;background:#454545;"></div>
<svg style="left:935px;top:728px" width="1064" height="619" viewBox="935 728 1064 619"><defs><linearGradient id="gb2" x1="0" y1="0" x2="0" y2="1"><stop offset="0" stop-color="#1e3a52" stop-opacity="0"/><stop offset="1" stop-color="#24425c"/></linearGradient></defs><rect x="936" y="1036.4" width="532" height="1.6" fill="#8a5a5a"/><rect x="1468" y="1036.4" width="531" height="1.6" fill="#5e5e5e"/><rect x="1467" y="968.3" width="2" height="69" fill="url(#gb2)"/><defs><filter id="bl" x="-50%" y="-50%" width="200%" height="200%"><feGaussianBlur stdDeviation="4"/></filter></defs><path d="M1657.5 924.0 C1662.5 924.0 1665.5 925.7 1669.6 928.2 C1673.6 930.7 1679.2 936.1 1681.8 939.1 C1684.4 942.1 1685.6 943.6 1685.4 946.4 C1685.2 949.2 1680.1 952.9 1680.5 956.1 C1680.9 959.3 1683.5 960.9 1687.8 965.8 C1692.0 970.7 1699.9 978.4 1706.0 985.3 C1712.1 992.2 1717.4 999.5 1724.2 1007.1 C1731.0 1014.7 1741.6 1026.4 1746.8 1031.0 C1752.0 1035.6 1751.8 1034.2 1755.3 1034.9 C1758.8 1035.7 1763.7 1034.7 1767.5 1035.5 C1771.3 1036.3 1775.4 1037.0 1778.4 1039.7 C1781.4 1042.4 1784.2 1048.1 1785.7 1051.9 C1787.2 1055.8 1788.5 1058.6 1787.5 1062.8 C1786.5 1067.0 1783.9 1069.6 1779.6 1077.3 C1775.2 1085.0 1766.9 1099.0 1761.4 1108.9 C1755.9 1118.8 1751.9 1128.1 1746.8 1136.8 C1741.7 1145.5 1736.2 1154.8 1731.0 1161.1 C1725.8 1167.4 1720.3 1171.6 1715.3 1174.5 C1710.2 1177.4 1705.6 1178.9 1700.7 1178.7 C1695.8 1178.5 1689.5 1175.7 1686.1 1173.2 C1682.7 1170.7 1681.9 1169.2 1680.1 1163.5 C1678.3 1157.8 1676.6 1147.4 1675.2 1139.3 C1673.8 1131.2 1673.0 1121.9 1671.6 1115.0 C1670.2 1108.1 1668.9 1103.1 1666.7 1098.0 C1664.5 1092.9 1661.4 1088.8 1658.2 1084.6 C1655.0 1080.3 1651.5 1077.3 1647.3 1072.5 C1643.1 1067.7 1638.6 1061.3 1633.2 1055.7 C1627.8 1050.1 1621.3 1043.0 1615.0 1038.7 C1608.7 1034.5 1603.7 1032.2 1595.6 1030.2 C1587.5 1028.2 1575.3 1028.3 1566.4 1026.5 C1557.5 1024.7 1547.0 1024.1 1542.1 1019.3 C1537.1 1014.4 1537.1 1003.5 1536.7 997.4 C1536.3 991.3 1536.8 987.2 1539.7 982.8 C1542.6 978.3 1546.8 975.6 1554.3 970.7 C1561.8 965.9 1574.1 959.2 1584.6 953.7 C1595.1 948.2 1608.3 942.1 1617.4 937.9 C1626.5 933.6 1632.6 930.5 1639.3 928.2 C1646.0 925.9 1652.5 924.0 1657.5 924.0 Z" fill="#9e9e9e"/><clipPath id="cb"><path d="M1657.5 924.0 C1662.5 924.0 1665.5 925.7 1669.6 928.2 C1673.6 930.7 1679.2 936.1 1681.8 939.1 C1684.4 942.1 1685.6 943.6 1685.4 946.4 C1685.2 949.2 1680.1 952.9 1680.5 956.1 C1680.9 959.3 1683.5 960.9 1687.8 965.8 C1692.0 970.7 1699.9 978.4 1706.0 985.3 C1712.1 992.2 1717.4 999.5 1724.2 1007.1 C1731.0 1014.7 1741.6 1026.4 1746.8 1031.0 C1752.0 1035.6 1751.8 1034.2 1755.3 1034.9 C1758.8 1035.7 1763.7 1034.7 1767.5 1035.5 C1771.3 1036.3 1775.4 1037.0 1778.4 1039.7 C1781.4 1042.4 1784.2 1048.1 1785.7 1051.9 C1787.2 1055.8 1788.5 1058.6 1787.5 1062.8 C1786.5 1067.0 1783.9 1069.6 1779.6 1077.3 C1775.2 1085.0 1766.9 1099.0 1761.4 1108.9 C1755.9 1118.8 1751.9 1128.1 1746.8 1136.8 C1741.7 1145.5 1736.2 1154.8 1731.0 1161.1 C1725.8 1167.4 1720.3 1171.6 1715.3 1174.5 C1710.2 1177.4 1705.6 1178.9 1700.7 1178.7 C1695.8 1178.5 1689.5 1175.7 1686.1 1173.2 C1682.7 1170.7 1681.9 1169.2 1680.1 1163.5 C1678.3 1157.8 1676.6 1147.4 1675.2 1139.3 C1673.8 1131.2 1673.0 1121.9 1671.6 1115.0 C1670.2 1108.1 1668.9 1103.1 1666.7 1098.0 C1664.5 1092.9 1661.4 1088.8 1658.2 1084.6 C1655.0 1080.3 1651.5 1077.3 1647.3 1072.5 C1643.1 1067.7 1638.6 1061.3 1633.2 1055.7 C1627.8 1050.1 1621.3 1043.0 1615.0 1038.7 C1608.7 1034.5 1603.7 1032.2 1595.6 1030.2 C1587.5 1028.2 1575.3 1028.3 1566.4 1026.5 C1557.5 1024.7 1547.0 1024.1 1542.1 1019.3 C1537.1 1014.4 1537.1 1003.5 1536.7 997.4 C1536.3 991.3 1536.8 987.2 1539.7 982.8 C1542.6 978.3 1546.8 975.6 1554.3 970.7 C1561.8 965.9 1574.1 959.2 1584.6 953.7 C1595.1 948.2 1608.3 942.1 1617.4 937.9 C1626.5 933.6 1632.6 930.5 1639.3 928.2 C1646.0 925.9 1652.5 924.0 1657.5 924.0 Z"/></clipPath><g clip-path="url(#cb)"><path d="M1600 1030 L1688 956 M1682 1108 L1752 1055" stroke="#808080" stroke-width="7" filter="url(#bl)" opacity="0.8"/></g><line x1="1536" y1="1037.2" x2="1790" y2="1037.2" stroke="#c09090" stroke-width="1" opacity="0.45"/><polygon points="1649.6,995 1682.4,961 1749.7,1035 1714.5,1064.8" fill="none" stroke="#6e6e6e" stroke-width="0.9"/><path d="M1660.5 1041.5 L1667 1049.5" stroke="#333" stroke-width="2"/><line x1="981.4" y1="1261.3" x2="981.4" y2="1287.5" stroke="#5f9a6a" stroke-width="2.2"/><line x1="981.4" y1="1287.5" x2="1008.7" y2="1287.5" stroke="#b86060" stroke-width="2.6"/></svg>
<div class="t" style="left:976.15px;top:1239.41px;font-size:15.94px;color:#6aaa70;transform:scaleX(1.0001);transform-origin:0 0;-webkit-text-stroke:0;">Y</div>
<div class="t" style="left:1016.56px;top:1280.35px;font-size:13.77px;color:#c07070;transform:scaleX(1.0001);transform-origin:0 0;-webkit-text-stroke:0;">X</div>
<div class="t" style="left:975.75px;top:1279.73px;font-size:14.49px;color:#4f88b8;transform:scaleX(1.0001);transform-origin:0 0;-webkit-text-stroke:0;">Z</div>
<div style="left:940.3px;top:735.2px;width:34.8px;height:24.4px;background:#141414;border-radius:5px;"></div>
<div style="left:983.1px;top:735.2px;width:87.6px;height:24.4px;background:#141414;border-radius:5px;"></div>
<div style="left:1077.9px;top:735.2px;width:120.8px;height:24.4px;background:#141414;border-radius:5px;"></div>
<div style="left:1205.5px;top:735.2px;width:34.5px;height:24.4px;background:#141414;border-radius:5px;"></div>
<div style="left:1273.5px;top:735.2px;width:38.3px;height:24.4px;background:#141414;border-radius:5px;"></div>
<div style="left:1891.4px;top:734.0px;width:105.6px;height:24.4px;background:#141414;border-radius:5px;"></div>
<svg style="left:949.90px;top:739.80px;" width="14.60" height="15.80" viewBox="0 0 100 100" preserveAspectRatio="none"><path d="M35.0 16.2 L37.9 1.5 L62.1 1.5 L65.0 16.2 L71.7 20.1 L86.0 15.3 L98.1 36.2 L86.8 46.1 L86.8 53.9 L98.1 63.8 L86.0 84.7 L71.7 79.9 L65.0 83.8 L62.1 98.5 L37.9 98.5 L35.0 83.8 L28.3 79.9 L14.0 84.7 L1.9 63.8 L13.2 53.9 L13.2 46.1 L1.9 36.2 L14.0 15.3 L28.3 20.1 Z" fill="#d2d2d2"/><circle cx="50" cy="50" r="17" fill="#141414"/></svg>
<svg style="left:990.90px;top:743.80px;" width="16.50" height="9.40" viewBox="0 0 100 100" preserveAspectRatio="none"><rect x="0" y="0" width="63" height="100" rx="8" fill="#d2d2d2"/><path d="M69 50 L100 10 L100 90 Z" fill="#d2d2d2"/></svg>
<svg style="left:1088.60px;top:740.60px;" width="11.80" height="15.10" viewBox="0 0 100 140" preserveAspectRatio="none"><path d="M50 0 C80 0 100 22 100 50 C100 72 84 82 76 106 L24 106 C16 82 0 72 0 50 C0 22 20 0 50 0 Z" fill="#d2d2d2"/><rect x="26" y="110" width="48" height="9" fill="#9a9a9a"/><rect x="26" y="122" width="48" height="18" rx="8" fill="#d2d2d2"/><path d="M22 52 C22 35 30 24 42 20" stroke="#141414" stroke-width="9" fill="none" opacity="0.6"/></svg>
<svg style="left:1214.80px;top:742.10px;" width="15.50" height="10.60" viewBox="0 0 100 72" preserveAspectRatio="none"><path d="M0 36 Q50 -22 100 36 Q50 94 0 36 Z" fill="#d2d2d2"/><circle cx="50" cy="36" r="25" fill="#141414"/><circle cx="50" cy="36" r="18" fill="#d2d2d2"/></svg>
<svg style="left:1279.80px;top:741.10px;" width="26.20" height="13.60" viewBox="0 0 100 56" preserveAspectRatio="none"><circle cx="50" cy="28" r="13" fill="#d2d2d2"/><g stroke="#d2d2d2" stroke-width="9" fill="none" stroke-linecap="round"><path d="M31 8 Q20 28 31 48"/><path d="M69 8 Q80 28 69 48"/><path d="M15 2 Q0 28 15 54"/><path d="M85 2 Q100 28 85 54"/></g></svg>
<svg style="left:1899.00px;top:738.90px;" width="16.00" height="15.70" viewBox="0 0 100 100" preserveAspectRatio="none"><path d="M50 0 L100 24 L50 48 L0 24 Z" fill="#d2d2d2"/><path d="M0 33 L50 57 L100 33 L100 47 L50 72 L0 47 Z" fill="#d2d2d2"/><path d="M0 57 L50 81 L100 57 L100 74 L50 100 L0 74 Z" fill="#d2d2d2"/></svg>
<div class="t" style="left:1014.65px;top:741.23px;font-size:14.49px;color:#cfcfcf;transform:scaleX(0.9020);transform-origin:0 0;">Camera</div>
<div class="t" style="left:1104.99px;top:741.23px;font-size:14.49px;color:#cfcfcf;transform:scaleX(0.9031);transform-origin:0 0;">RTX Real-time</div>
<div class="t" style="left:1922.67px;top:740.23px;font-size:14.49px;color:#cfcfcf;transform:scaleX(0.9235);transform-origin:0 0;">Root Layer</div>
</body></html>
